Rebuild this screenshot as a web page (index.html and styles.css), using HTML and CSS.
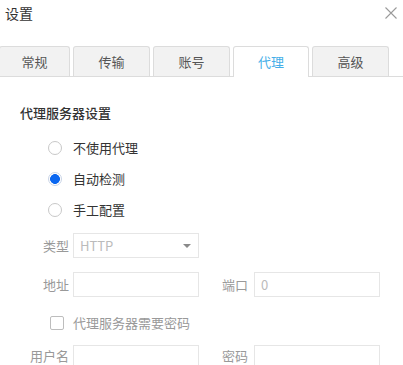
FILE: index.html
```html
<!DOCTYPE html>
<html lang="zh-CN">
<head>
  <meta charset="UTF-8">
  <meta name="viewport" content="width=device-width, initial-scale=1.0">
  <title>设置</title>
  <link rel="stylesheet" href="styles.css">
</head>
<body>
  <div class="dialog">
    <header class="title-bar">
      <span class="title">设置</span>
      <span class="close">
        <svg width="12" height="12" viewBox="0 0 12 12"><path d="M0.5 0.5 L11.5 11.5 M11.5 0.5 L0.5 11.5" stroke="#9a9a9a" stroke-width="1.1" fill="none"/></svg>
      </span>
    </header>

    <nav class="tabs">
      <a class="tab first">常规</a>
      <a class="tab">传输</a>
      <a class="tab">账号</a>
      <a class="tab active">代理</a>
      <a class="tab">高级</a>
    </nav>

    <section class="panel">
      <h2 class="section-title">代理服务器设置</h2>

      <div class="radio-group">
        <label class="radio"><span class="dot"></span>不使用代理</label>
        <label class="radio checked"><span class="dot"></span>自动检测</label>
        <label class="radio"><span class="dot"></span>手工配置</label>
      </div>

      <div class="form">
        <div class="row row-type">
          <span class="label">类型</span>
          <div class="select">HTTP<span class="caret"></span></div>
        </div>
        <div class="row row-addr">
          <span class="label">地址</span>
          <div class="input"></div>
          <span class="label label-2">端口</span>
          <div class="input">0</div>
        </div>
        <div class="row row-check">
          <span class="box"></span>
          <span class="check-text">代理服务器需要密码</span>
        </div>
        <div class="row row-user">
          <span class="label">用户名</span>
          <div class="input"></div>
          <span class="label label-2">密码</span>
          <div class="input"></div>
        </div>
      </div>
    </section>
  </div>
</body>
</html>
```

FILE: styles.css
```css
body {
  margin: 0;
  padding: 0;
  background: #fff;
  font-family: "Noto Sans CJK SC", "Noto Sans", sans-serif;
  font-size: 13px;
  color: #333;
  overflow: hidden;
}
.dialog {
  width: 403px;
  height: 365px;
  overflow: hidden;
}
.title-bar {
  display: flex;
  justify-content: space-between;
  align-items: center;
  height: 26px;
  padding: 0 6px 0 5px;
}
.title {
  font-size: 14px;
  color: #333;
}
.close {
  display: flex;
}
.tabs {
  display: flex;
  gap: 3px;
  margin-top: 20px;
  height: 30px;
  border-bottom: 1px solid #dcdcdc;
}
.tab {
  box-sizing: border-box;
  width: 77px;
  height: 30px;
  background: #f2f2f2;
  border: 1px solid #dcdcdc;
  border-bottom: none;
  border-radius: 3px 3px 0 0;
  color: #555;
  text-align: center;
  line-height: 30px;
}
.tab.first {
  width: 71px;
  margin-left: -1px;
}
.tab.active {
  height: 31px;
  width: 76px;
  background: #fff;
  color: #45aee8;
}
.panel {
  padding-left: 20px;
}
.section-title {
  margin: 26px 0 0;
  font-size: 13px;
  font-weight: 500;
  line-height: 20px;
  color: #333;
}
.radio-group {
  padding: 9px 0 0 28px;
}
.radio {
  display: flex;
  align-items: center;
  height: 31px;
  color: #333;
}
.dot {
  box-sizing: border-box;
  width: 14px;
  height: 14px;
  margin-right: 11px;
  border: 1px solid #c8c8c8;
  border-radius: 50%;
}
.radio.checked .dot {
  border-color: #c9d4e6;
  background: radial-gradient(circle, #0b67f0 0 4.6px, #fff 5.2px);
}
.form {
  margin-top: 8px;
  margin-left: -20px;
}
.row {
  display: flex;
  align-items: center;
  height: 25px;
}
.label {
  width: 69px;
  padding-right: 4px;
  text-align: right;
  color: #999;
  line-height: 16px;
  white-space: nowrap;
}
.label-2 {
  width: 49px;
  padding-right: 6px;
}
.select,
.input {
  box-sizing: border-box;
  width: 126px;
  height: 25px;
  border: 1px solid #e6e6e6;
  padding-left: 6px;
  line-height: 23px;
  color: #bbb;
}
.select {
  position: relative;
}
.caret {
  position: absolute;
  right: 7px;
  top: 10px;
  border-left: 4px solid transparent;
  border-right: 4px solid transparent;
  border-top: 4px solid #8a8a8a;
}
.row-addr {
  margin-top: 14px;
}
.row-check {
  margin-top: 13px;
  padding-left: 50px;
}
.box {
  box-sizing: border-box;
  width: 14px;
  height: 14px;
  border: 1px solid #bdbdbd;
  border-radius: 2px;
  margin-right: 9px;
}
.check-text {
  color: #999;
}
.row-user {
  margin-top: 10px;
  align-items: flex-start;
}
.row-user .label {
  margin-top: 3px;
}
```
